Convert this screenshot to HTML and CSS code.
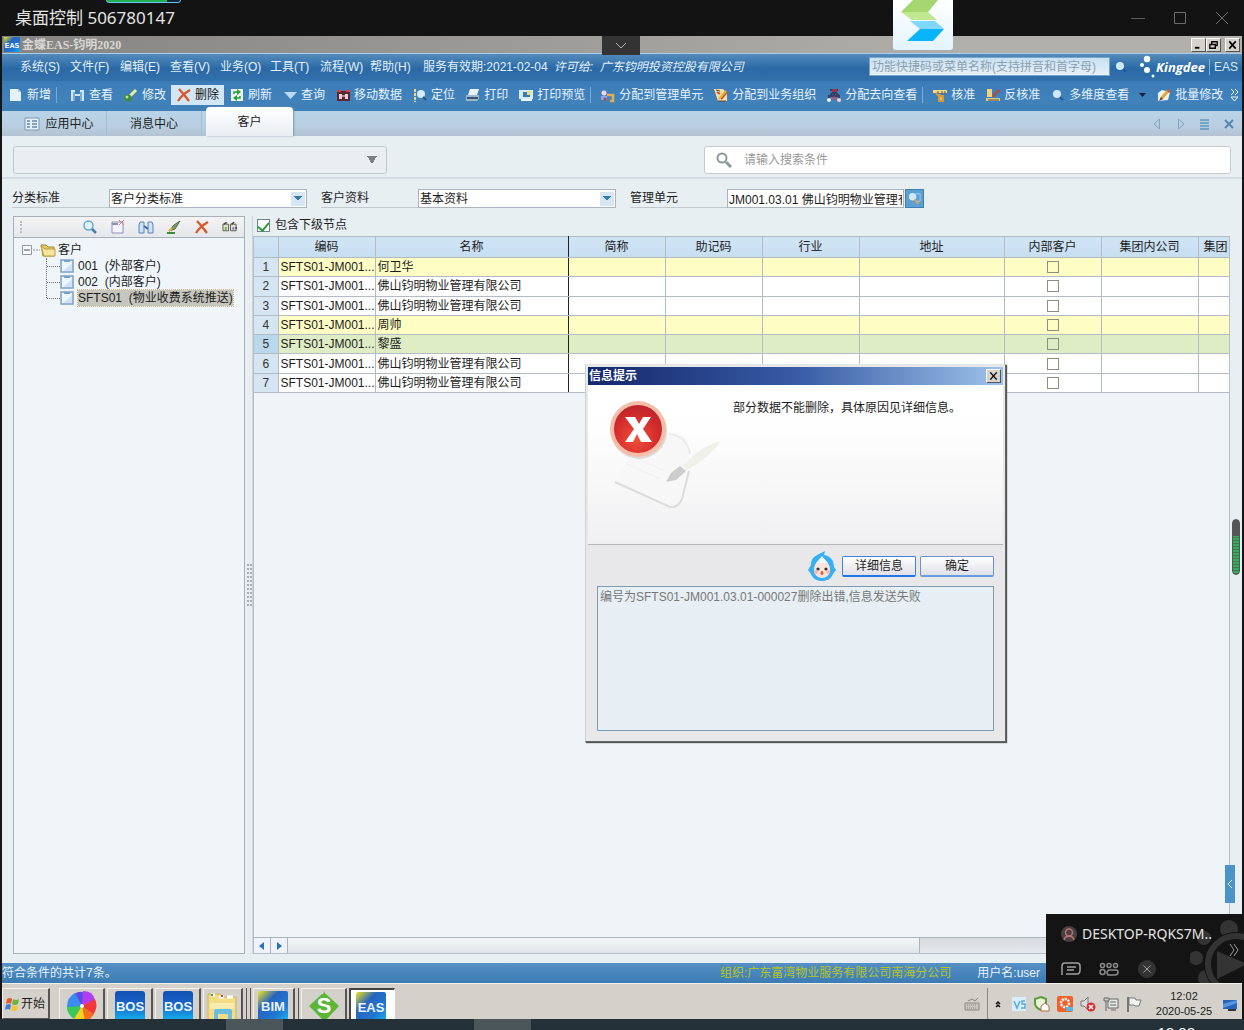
FILE: index.html
```html
<!DOCTYPE html>
<html lang="zh-CN">
<head>
<meta charset="utf-8">
<title>桌面控制 506780147</title>
<link rel="stylesheet" href="styles.css">
</head>
<body>
<svg class="defs" aria-hidden="true">
  <defs>
    <linearGradient id="g-blue" x1="0" y1="0" x2="0" y2="1"><stop offset="0" stop-color="#1450b4"/><stop offset=".5" stop-color="#1668c8"/><stop offset="1" stop-color="#16b4f0"/></linearGradient>
    <linearGradient id="g-eas" x1="0" y1="0" x2="1" y2="1"><stop offset="0" stop-color="#f0e61e"/><stop offset=".35" stop-color="#2864be"/><stop offset=".7" stop-color="#1e78d2"/><stop offset="1" stop-color="#1eb4f0"/></linearGradient>
    <radialGradient id="g-red" cx=".45" cy=".7" r=".75"><stop offset="0" stop-color="#f0503c"/><stop offset=".6" stop-color="#d42c2c"/><stop offset="1" stop-color="#b8222a"/></radialGradient>
  </defs>
  <symbol id="i-page" viewBox="0 0 16 16"><path d="M2 2h8l3 3v9H2z" fill="#e4f2fc"/><path d="M10 2v3h3z" fill="#a6cbe8"/></symbol>
  <symbol id="i-binoc" viewBox="0 0 16 16"><path d="M1 3h4v4h5V3h4v11h-4V9H5v5H1z" fill="#d4e6fa"/><path d="M4 5v9M11 5v9" stroke="#5b95d6" stroke-width="1.500"/></symbol>
  <symbol id="i-brush" viewBox="0 0 16 16"><path d="M13 3L7 9" stroke="#e8f0a0" stroke-width="3"/><circle cx="5" cy="11" r="3.500" fill="#3c8c3c"/><circle cx="4" cy="10" r="1.500" fill="#c8e07a"/></symbol>
  <symbol id="i-x" viewBox="0 0 16 16"><path d="M3 2c3 3 6 7 10 12M14 3C9 6 5 9 2 14" stroke="#d9572b" stroke-width="2.400" fill="none"/></symbol>
  <symbol id="i-refresh" viewBox="0 0 16 16"><path d="M2 2h12v12H2z" fill="#e6f4ee"/><path d="M5 7V5h4M11 9v2H7" stroke="#2b9a3a" stroke-width="1.500" fill="none"/><path d="M8 2l4 3-4 3zM8 8l-4 3 4 3z" fill="#2b9a3a"/></symbol>
  <symbol id="i-filter" viewBox="0 0 16 16"><path d="M2 5h13L8.500 12z" fill="#b9d9f7"/></symbol>
  <symbol id="i-move" viewBox="0 0 16 16"><path d="M2 4h13v10H2z" fill="#5a2632"/><path d="M2 3h4v2H2zM11 3h4v2h-4z" fill="#e43c3c"/><path d="M4 7h3v5H4zM10 7h3v5h-3z" fill="#f2cdd4"/><path d="M7 9h3" stroke="#fff"/></symbol>
  <symbol id="i-locate" viewBox="0 0 16 16"><path d="M3 2v13" stroke="#e8d890" stroke-width="2" stroke-dasharray="3 1"/><circle cx="9" cy="7" r="4" fill="#d4ecff"/><path d="M11 10l3 3" stroke="#2a527a" stroke-width="2"/></symbol>
  <symbol id="i-print" viewBox="0 0 16 16"><path d="M5 2h9l-2 6H3z" fill="#e9f3fa"/><path d="M1 8h13v4l-2 2H1z" fill="#9bb7cd"/><path d="M2 11h11" stroke="#39556f" stroke-width="2"/></symbol>
  <symbol id="i-preview" viewBox="0 0 16 16"><path d="M1 3h14v9H1z" fill="#d8ebf8"/><path d="M5 5h7v5H5z" fill="#3878b8"/><path d="M9 4h4v4H9z" fill="#e8df76"/><path d="M3 13h11" stroke="#e9f5ff" stroke-width="2"/></symbol>
  <symbol id="i-unit" viewBox="0 0 16 16"><circle cx="4" cy="6" r="2.500" fill="#f4d0e4"/><path d="M1 9h6v4H1z" fill="#8ba5ee"/><path d="M7 8h6v6h-3" stroke="#e2ae50" stroke-width="2.500" fill="none"/><circle cx="5" cy="12" r="1.500" fill="#b4452e"/></symbol>
  <symbol id="i-org" viewBox="0 0 16 16"><path d="M1 2h9l4 5v7H5z" fill="#f1dfae"/><path d="M4 5l3 2M8 12l6-7" stroke="#d24a28" stroke-width="2"/><path d="M6 12l7-8" stroke="#e9b72e" stroke-width="2"/><path d="M3 3l4 1M5 14h8" stroke="#6b4622"/></symbol>
  <symbol id="i-flow" viewBox="0 0 16 16"><path d="M4 3h8M8 4v4M3 13V9h10v4M4 9l4-5 5 5" stroke="#383d68" stroke-width="2" fill="none"/><path d="M6 2h5v3H6z" fill="#9d3146"/><circle cx="3" cy="13" r="2" fill="#f0f0ff"/><circle cx="13" cy="13" r="2" fill="#f0d0d0"/><circle cx="8" cy="11" r="1.500" fill="#da4848"/></symbol>
  <symbol id="i-approve" viewBox="0 0 16 16"><path d="M1 3h14v3H1z" fill="#f4da8b"/><path d="M4 6l3 3h5M7 9v5h4V8" stroke="#d79b38" stroke-width="2" fill="#edbf60"/><path d="M6 4v3M10 4v3M13 4v3" stroke="#70522c"/></symbol>
  <symbol id="i-unapprove" viewBox="0 0 16 16"><path d="M2 2h5v8H2z" fill="#f0d37f"/><path d="M1 11h14v3H1z" fill="#d6c88f"/><path d="M8 10l3-4 4-3" stroke="#c8402e" stroke-width="2" fill="none"/><path d="M3 13h11" stroke="#5d5132"/></symbol>
  <symbol id="i-glass" viewBox="0 0 16 16"><circle cx="7" cy="7" r="4" fill="#cfeaff"/><path d="M10 10l3 3" stroke="#235b92" stroke-width="2"/></symbol>
  <symbol id="i-edit" viewBox="0 0 16 16"><path d="M2 6l4-3 8 2-2 8-10 1z" fill="#eef1f4"/><path d="M5 12l7-8" stroke="#dfaa3a" stroke-width="3"/><path d="M11 4l2-2 2 2-2 2z" fill="#cc5b40"/><path d="M3 14l2-4 2 2z" fill="#584b37"/></symbol>
  <symbol id="i-search" viewBox="0 0 16 16"><circle cx="6.500" cy="6.500" r="4.500" fill="#e3f4fd" stroke="#6aa7d4" stroke-width="1.500"/><path d="M10 10l4 4" stroke="#4a7fb0" stroke-width="2.500"/></symbol>
  <symbol id="i-newdoc" viewBox="0 0 16 16"><path d="M2 3h11v11H2z" fill="#f3f4fc" stroke="#8d93b8"/><path d="M2 5h6" stroke="#8d93b8" stroke-width="2"/><path d="M9 1l5 5M14 1L9 6" stroke="#dc7f7f"/></symbol>
  <symbol id="i-binoc2" viewBox="0 0 16 16"><path d="M2 3h4v11H1V6zM10 3h4l1 3v8h-5z" fill="#cfe3f7" stroke="#5683b5"/><path d="M6 7l4 3" stroke="#3b6ba1" stroke-width="2"/></symbol>
  <symbol id="i-pen" viewBox="0 0 16 16"><path d="M14 2l-5 8-6 2 5-6z" fill="#7f9c62" stroke="#5a6a48"/><path d="M1 14h8" stroke="#3d8b3a" stroke-width="2"/><path d="M3 12l3-3" stroke="#e0b53c" stroke-width="2"/></symbol>
  <symbol id="i-tree" viewBox="0 0 17 16"><path d="M1 5h6v7H1zM9 5h6v7H9z" fill="#e2e2d2" stroke="#55594e"/><path d="M2 5l3-2M10 5l3-2M14 9h2" stroke="#3e4438" stroke-width="1.500"/><path d="M3 8h2v3H3z" fill="#5cae56"/><path d="M11 8h2v3h-2z" fill="#8f7bda"/></symbol>
  <symbol id="i-leaf" viewBox="0 0 14 14"><path d="M1 1h12v12H1z" fill="#eef6fd" stroke="#7c9fc6" stroke-width="1.500"/><path d="M4 1h6v2H4z" fill="#7c9fc6"/><path d="M3 12l9-8v8z" fill="#cfe2f4"/></symbol>
</svg>

<header class="remote-bar">
  <span class="session-pill"></span>
  <h1>桌面控制 506780147</h1>
  <div class="remote-controls">
    <button aria-label="最小化"><svg viewBox="0 0 16 16"><path d="M1 8.500h14" stroke="#5c5c5c"/></svg></button>
    <button aria-label="最大化"><svg viewBox="0 0 16 16"><path d="M2.500 2.500h11v11h-11z" stroke="#6c6c6c" fill="none"/></svg></button>
    <button aria-label="关闭"><svg viewBox="0 0 16 16"><path d="M2 2l12 12M14 2L2 14" stroke="#6c6c6c"/></svg></button>
  </div>
  <div class="float-logo"><svg viewBox="0 0 60 50"><path d="M20 0h25L35 12H8z" fill="#a5d66f"/><path d="M8 12h27l9 8H19z" fill="#bfe88f"/><path d="M17 21h25l9 8H27z" fill="#80d8ff"/><path d="M27 29h24L40 41H14z" fill="#0ab4fb"/></svg></div>
  <button class="drop-handle" aria-label="展开"><svg viewBox="0 0 12 7"><path d="M1 1l5 5 5-5" stroke="#b4b4b4" fill="none"/></svg></button>
</header>

<div class="desktop">
  <div class="win-title">
    <svg class="eas-mini" viewBox="0 0 16 15"><rect width="16" height="15" fill="url(#g-eas)"/><text x="8" y="11" text-anchor="middle" class="mini-text">EAS</text></svg>
    <b>金蝶EAS-钧明2020</b>
    <div class="win-buttons">
      <button aria-label="最小化"><svg viewBox="0 0 12 10"><path d="M2 8h5" stroke="#000" stroke-width="2"/></svg></button>
      <button aria-label="还原"><svg viewBox="0 0 12 10"><path d="M4 1.500h6v4H8M4 1v3M2 4.500h6v4H2z" stroke="#000" stroke-width="1.500" fill="none"/></svg></button>
      <button class="apart" aria-label="关闭"><svg viewBox="0 0 12 10"><path d="M2.500 1l7 8M9.500 1l-7 8" stroke="#000" stroke-width="1.800"/></svg></button>
    </div>
  </div>

  <nav class="menu-bar">
    <ul>
      <li><a href="#">系统(S)</a></li><li><a href="#">文件(F)</a></li><li><a href="#">编辑(E)</a></li><li><a href="#">查看(V)</a></li>
      <li><a href="#">业务(O)</a></li><li><a href="#">工具(T)</a></li><li><a href="#">流程(W)</a></li><li><a href="#">帮助(H)</a></li>
    </ul>
    <span class="term">服务有效期:2021-02-04</span>
    <i>许可给:&nbsp; 广东钧明投资控股有限公司</i>
    <input class="quick" type="text" aria-label="功能搜索" placeholder="功能快捷码或菜单名称(支持拼音和首字母)">
    <svg class="icon"><use href="#i-glass"/></svg>
    <div class="brand">
      <svg viewBox="0 0 18 26"><g fill="#fff"><circle cx="9" cy="5" r="3.200"/><circle cx="4" cy="11" r="2"/><circle cx="9" cy="16" r="3"/><circle cx="15" cy="22" r="1.500"/></g></svg>
      <b>Kingdee</b><span>EAS</span>
    </div>
  </nav>

  <div class="tool-bar">
    <button><svg class="icon"><use href="#i-page"/></svg>新增</button>
    <span class="sep first"></span>
    <button><svg class="icon"><use href="#i-binoc"/></svg>查看</button>
    <button><svg class="icon"><use href="#i-brush"/></svg>修改</button>
    <button class="active"><svg class="icon"><use href="#i-x"/></svg>删除</button>
    <button><svg class="icon"><use href="#i-refresh"/></svg>刷新</button>
    <button><svg class="icon"><use href="#i-filter"/></svg>查询</button>
    <button><svg class="icon"><use href="#i-move"/></svg>移动数据</button>
    <button><svg class="icon"><use href="#i-locate"/></svg>定位</button>
    <button><svg class="icon"><use href="#i-print"/></svg>打印</button>
    <button><svg class="icon"><use href="#i-preview"/></svg>打印预览</button>
    <span class="sep"></span>
    <button><svg class="icon"><use href="#i-unit"/></svg>分配到管理单元</button>
    <button><svg class="icon"><use href="#i-org"/></svg>分配到业务组织</button>
    <button><svg class="icon"><use href="#i-flow"/></svg>分配去向查看</button>
    <span class="sep"></span>
    <button><svg class="icon"><use href="#i-approve"/></svg>核准</button>
    <button><svg class="icon"><use href="#i-unapprove"/></svg>反核准</button>
    <button><svg class="icon"><use href="#i-glass"/></svg>多维度查看</button>
    <svg class="caret" viewBox="0 0 17 8"><path d="M5 2h7l-3.500 4z" fill="#0c2340"/></svg>
    <button><svg class="icon"><use href="#i-edit"/></svg>批量修改</button>
    <svg class="more" viewBox="0 0 9 12"><path d="M1 0l3 3-3 3M5 0l3 3-3 3M1 8h7l-3.500 4z" stroke="#e8f4ff" fill="none"/></svg>
  </div>

  <div class="tab-bar">
    <button class="tab"><svg class="icon" viewBox="0 0 16 14"><path d="M1 1h14v12H1z" fill="#e5f0f8" stroke="#7898b4"/><path d="M3 4h3M3 7h3M3 10h3M8 4h5M8 7h5M8 10h5" stroke="#6388a9" stroke-width="1.500"/></svg>应用中心</button>
    <button class="tab">消息中心</button>
    <button class="tab current">客户</button>
    <div class="tab-nav">
      <svg viewBox="0 0 10 12"><path d="M7.500 1v10L2 6z" fill="none" stroke="#86a3bb"/></svg>
      <svg viewBox="0 0 10 12"><path d="M2.500 1v10L8 6z" fill="none" stroke="#86a3bb"/></svg>
      <svg viewBox="0 0 10 12"><path d="M0 2h9M0 5h9M0 8h9M0 11h9" stroke="#5b97c2" stroke-width="1.500"/></svg>
      <svg viewBox="0 0 10 12"><path d="M1 2l8 8M9 2l-8 8" stroke="#5685ad" stroke-width="2"/></svg>
    </div>
  </div>

  <section class="search-row">
    <select class="scheme" aria-label="方案"><option></option></select>
    <label class="query"><svg class="icon" viewBox="0 0 16 16"><circle cx="6" cy="6" r="4.500" fill="none" stroke="#8d969c" stroke-width="2"/><path d="M10 10l5 5" stroke="#8d969c" stroke-width="3"/></svg><input type="text" aria-label="搜索条件" placeholder="请输入搜索条件"></label>
  </section>

  <section class="filter-row">
    <label for="f1">分类标准</label>
    <select id="f1"><option>客户分类标准</option></select>
    <label for="f2">客户资料</label>
    <select id="f2"><option>基本资料</option></select>
    <label for="f3">管理单元</label>
    <input id="f3" type="text" value="JM001.03.01 佛山钧明物业管理有限公司">
    <button aria-label="选择管理单元"><svg viewBox="0 0 16 16"><circle cx="6" cy="6" r="4" fill="#cfe9fb"/><path d="M9 3h5v8h-4" stroke="#a6d0ee" fill="none"/><path d="M8 9l4 5" stroke="#d2a757" stroke-width="2"/></svg></button>
  </section>

  <main class="work">
    <aside class="tree-panel">
      <div class="tree-tools">
        <span class="grip"></span>
        <button aria-label="查询"><svg class="icon"><use href="#i-search"/></svg></button>
        <button aria-label="新增分类"><svg class="icon"><use href="#i-newdoc"/></svg></button>
        <button aria-label="查看分类"><svg class="icon"><use href="#i-binoc2"/></svg></button>
        <button aria-label="修改分类"><svg class="icon"><use href="#i-pen"/></svg></button>
        <button aria-label="删除分类"><svg class="icon"><use href="#i-x"/></svg></button>
        <button aria-label="移动分类"><svg class="icon"><use href="#i-tree"/></svg></button>
      </div>
      <div class="tree">
        <div class="node root"><svg class="expander" viewBox="0 0 18 12"><path d="M.5 1.500h9v9h-9z" fill="#fff" stroke="#8d9aa4"/><path d="M2 6h6" stroke="#444"/><path d="M11 6h7" stroke="#8d9aa4" stroke-dasharray="2 1"/></svg><svg class="folder" viewBox="0 0 16 14"><path d="M1 2h5l2 2h6v9H3z" fill="#e7c95f" stroke="#a58a36"/><path d="M1 3l4 3h10v7H4z" fill="#f8e59a" stroke="#b79b45"/></svg>客户</div>
        <ul>
          <li><svg class="leaf"><use href="#i-leaf"/></svg><span>001&nbsp; (外部客户)</span></li>
          <li><svg class="leaf"><use href="#i-leaf"/></svg><span>002&nbsp; (内部客户)</span></li>
          <li><svg class="leaf"><use href="#i-leaf"/></svg><span class="selected">SFTS01&nbsp; (物业收费系统推送)</span></li>
        </ul>
      </div>
    </aside>
    <div class="splitter"></div>
    <div class="list-side">
      <label class="include"><input type="checkbox" checked>包含下级节点</label>
      <div class="grid-box">
        <table>
          <colgroup><col class="c-no"><col class="c-std"><col class="c-name"><col class="c-std"><col class="c-std"><col class="c-std"><col class="c-addr"><col class="c-std"><col class="c-std"><col></colgroup>
          <thead><tr><th></th><th>编码</th><th class="frozen">名称</th><th>简称</th><th>助记码</th><th>行业</th><th>地址</th><th>内部客户</th><th>集团内公司</th><th class="cut">集团</th></tr></thead>
          <tbody>
            <tr class="mark"><th>1</th><td>SFTS01-JM001...</td><td class="frozen">何卫华</td><td></td><td></td><td></td><td></td><td class="tick"><input type="checkbox" aria-label="内部客户 1"></td><td></td><td></td></tr>
            <tr><th>2</th><td>SFTS01-JM001...</td><td class="frozen">佛山钧明物业管理有限公司</td><td></td><td></td><td></td><td></td><td class="tick"><input type="checkbox" aria-label="内部客户 2"></td><td></td><td></td></tr>
            <tr><th>3</th><td>SFTS01-JM001...</td><td class="frozen">佛山钧明物业管理有限公司</td><td></td><td></td><td></td><td></td><td class="tick"><input type="checkbox" aria-label="内部客户 3"></td><td></td><td></td></tr>
            <tr class="mark"><th>4</th><td>SFTS01-JM001...</td><td class="frozen">周帅</td><td></td><td></td><td></td><td></td><td class="tick"><input type="checkbox" aria-label="内部客户 4"></td><td></td><td></td></tr>
            <tr class="picked"><th>5</th><td>SFTS01-JM001...</td><td class="frozen">黎盛</td><td></td><td></td><td></td><td></td><td class="tick"><input type="checkbox" aria-label="内部客户 5"></td><td></td><td></td></tr>
            <tr><th>6</th><td>SFTS01-JM001...</td><td class="frozen">佛山钧明物业管理有限公司</td><td></td><td></td><td></td><td></td><td class="tick"><input type="checkbox" aria-label="内部客户 6"></td><td></td><td></td></tr>
            <tr><th>7</th><td>SFTS01-JM001...</td><td class="frozen">佛山钧明物业管理有限公司</td><td></td><td></td><td></td><td></td><td class="tick"><input type="checkbox" aria-label="内部客户 7"></td><td></td><td></td></tr>
          </tbody>
        </table>
        <div class="h-scroll">
          <button aria-label="向左"><svg viewBox="0 0 10 10"><path d="M7 1v8L2 5z" fill="#2f6fc0"/></svg></button>
          <button aria-label="向右"><svg viewBox="0 0 10 10"><path d="M3 1v8l5-4z" fill="#2f6fc0"/></svg></button>
          <span class="thumb"></span>
        </div>
      </div>
    </div>
    <span class="meter"></span>
    <button class="side-tab" aria-label="展开侧栏"><svg viewBox="0 0 6 10"><path d="M5 1L1 5l4 4" stroke="#d8efff" fill="none"/></svg></button>
  </main>

  <footer class="status-bar">
    <span>符合条件的共计7条。</span>
    <span class="org">组织:广东富湾物业服务有限公司南海分公司</span>
    <span class="user">用户名:user</span>
  </footer>

  <div class="dialog" role="dialog" aria-label="信息提示">
    <div class="dialog-title"><b>信息提示</b><button aria-label="关闭"><svg viewBox="0 0 12 10"><path d="M2.500 1l7 8M9.500 1l-7 8" stroke="#000" stroke-width="1.500"/></svg></button></div>
    <div class="dialog-body">
      <svg class="error-art" viewBox="0 0 130 120">
        <path d="M40 35l34-2q12 3 13 18l-8 48q-4 10-12 9L12 82z" fill="#f7f7f7"/>
        <path d="M12 82l55 25q8 1 12-8l7-28" fill="none" stroke="#dcdcdc" stroke-width="2"/>
        <path d="M66 34q18 2 21 20" fill="none" stroke="#ebebeb" stroke-width="2"/>
        <path d="M80 66q18-20 38-25-12 17-34 29z" fill="#eff1e8"/>
        <path d="M63 82l5-9 9-7 6 5-10 9z" fill="#ccc"/>
        <path d="M24 64l34 15M28 56l34 15" stroke="#f0f0f0"/>
        <circle cx="36" cy="31" r="28" fill="#dadada"/>
        <circle cx="35" cy="29" r="28" fill="#f6bda9"/>
        <circle cx="35" cy="29" r="24" fill="url(#g-red)"/>
        <path d="M22 17h10l4 7 4-7h8l-8 12 9 13H38l-4-8-4 8h-8l9-13z" fill="#fff"/>
      </svg>
      <p>部分数据不能删除，具体原因见详细信息。</p>
    </div>
    <div class="dialog-foot">
      <div class="actions">
        <svg class="mascot" viewBox="0 0 30 30"><path d="M4 14C4 6 9 5 12 3l6-3-1 4c7 1 10 6 10 12l2 3-3 4c-2 5-6 7-11 7S6 28 4 23l-3-4z" fill="#35b0f2"/><path d="M15 8c5 2 8 5 8 11 0 5-4 8-8 8s-8-3-8-8c0-6 3-9 8-11z" fill="#fbe4dc"/><path d="M15 5l6 7H9z" fill="#eef8fd"/><circle cx="11" cy="18" r="1.600" fill="#333"/><circle cx="19" cy="18" r="1.600" fill="#333"/><circle cx="9" cy="21" r="2" fill="#f8b8b0"/><circle cx="21" cy="21" r="2" fill="#f8b8b0"/><ellipse cx="15" cy="22" rx="1.500" ry="2" fill="#e0573c"/></svg>
        <button class="primary">详细信息</button><button>确定</button>
      </div>
      <textarea readonly aria-label="详细信息">编号为SFTS01-JM001.03.01-000027删除出错,信息发送失败</textarea>
    </div>
  </div>

  <div class="remote-panel">
    <svg class="gear" viewBox="0 0 54 69"><g fill="#343434"><circle cx="39" cy="15" r="9"/><circle cx="14" cy="24" r="7"/><circle cx="6" cy="44" r="7"/><circle cx="16" cy="64" r="8"/></g><circle cx="46" cy="50" r="32" fill="#141414"/><circle cx="46" cy="50" r="28" fill="none" stroke="#343434" stroke-width="6"/><path d="M27 37l30 13-30 15z" fill="#343434"/></svg>
    <div class="peer"><svg viewBox="0 0 16 16"><circle cx="8" cy="8" r="8" fill="#4a3f41"/><circle cx="8" cy="6.500" r="3.500" fill="none" stroke="#b9737b" stroke-width="1.500"/><path d="M3 14c1-5 9-5 10 0" fill="none" stroke="#b9737b" stroke-width="1.500"/></svg><span>DESKTOP-RQKS7M..</span></div>
    <div class="peer-tools">
      <button aria-label="聊天"><svg viewBox="0 0 20 16"><path d="M1 14V5q0-3 3-3h12q3 0 3 3v4q0 4-3 4H5M6 6h9M6 9h7" fill="none" stroke="#a0a0a0" stroke-width="1.500"/></svg></button>
      <button aria-label="成员"><svg viewBox="0 0 20 16"><g fill="none" stroke="#8c8c8c" stroke-width="1.500"><circle cx="3.500" cy="4.500" r="2"/><circle cx="10" cy="4.500" r="2"/><circle cx="16.500" cy="4.500" r="2"/><circle cx="3.500" cy="11" r="2.500"/><path d="M8 12q0-3 3-3h6q2 0 2 2 0 3-3 3H9z"/></g></svg></button>
      <button aria-label="断开"><svg viewBox="0 0 20 20"><circle cx="10" cy="10" r="10" fill="#333"/><path d="M6 6l8 8M14 6l-8 8" stroke="#aaa"/></svg></button>
    </div>
    <svg class="chevrons" viewBox="0 0 10 14"><path d="M1 1l4 6-4 6M5 1l4 6-4 6" fill="none" stroke="#9a9a9a"/></svg>
  </div>
</div>

<footer class="task-bar">
  <button class="start"><svg viewBox="0 0 14 14"><path d="M2 2q3-2 5 0l-1 5q-2-2-5 0z" fill="#e4572e"/><path d="M8 2q3 2 6 0l-1 5q-3 2-6 0z" fill="#6cb33e"/><path d="M1 8q3-2 5 0l-1 5q-2-2-5 0z" fill="#3d7fd6"/><path d="M7 8q3 2 6 0l-1 5q-3 2-6 0z" fill="#f4c430"/></svg>开始</button>
  <button aria-label="浏览器"><svg viewBox="0 0 30 30"><path d="M15 15L7 3q8-5 13 1z" fill="#5a4be0"/><path d="M15 15l1-15q10 0 12 9z" fill="#b23cf0"/><path d="M15 15l13-7q4 9-3 17z" fill="#f03a3a"/><path d="M15 15l12 8q-4 7-12 7z" fill="#f4701e"/><path d="M15 15l3 15q-9 1-13-5z" fill="#f6d31e"/><path d="M15 15L7 28Q-1 22 0 14z" fill="#3bc65a"/><path d="M15 15L0 16Q0 6 8 2z" fill="#3b8cf0"/><circle cx="15" cy="15" r="2" fill="#fff"/></svg></button>
  <button aria-label="BOS"><svg viewBox="0 0 30 30"><rect width="30" height="30" rx="3" fill="url(#g-blue)"/><text x="15" y="20" text-anchor="middle" class="task-text">BOS</text></svg></button>
  <button aria-label="BOS"><svg viewBox="0 0 30 30"><rect width="30" height="30" rx="3" fill="url(#g-blue)"/><text x="15" y="20" text-anchor="middle" class="task-text">BOS</text></svg></button>
  <button class="stack2" aria-label="文件夹"><svg viewBox="0 0 30 30"><path d="M1 3h12l2 3h14v24H1z" fill="#f2dc86" stroke="#d0b45a"/><path d="M4 4h4M12 6h5M20 6h6" stroke="#fff" stroke-width="3"/><path d="M4 4h2" stroke="#3da35a" stroke-width="2"/><path d="M14 5h2" stroke="#d2452e" stroke-width="2"/><path d="M3 12h24v6H3z" fill="#f9ecb0"/><path d="M7 20q0-2 2-2h14q2 0 2 2v10h-4v-7H11v7H7z" fill="#6dbde0"/></svg></button>
  <button class="stack1" aria-label="BIM"><svg viewBox="0 0 30 30"><rect width="30" height="30" rx="2" fill="url(#g-eas)"/><text x="15" y="20" text-anchor="middle" class="task-text">BIM</text></svg></button>
  <button aria-label="向日葵"><svg viewBox="0 0 30 30"><path d="M15 0l-1 4h3zM13 3L0 15l14 14h3l13-14L17 3z" fill="#5cb537"/><text x="15" y="22" text-anchor="middle" class="s-text">S</text></svg></button>
  <button class="open" aria-label="EAS"><svg viewBox="0 0 30 30"><rect width="30" height="30" rx="2" fill="url(#g-eas)"/><text x="15" y="20" text-anchor="middle" class="task-text">EAS</text></svg></button>
  <div class="tray">
    <svg class="kbd" viewBox="0 0 16 16"><path d="M1 7h14v7H1zM4 5l4-2 3 2 3-3" fill="#c9c6bf" stroke="#8a8882"/><path d="M3 9h10M3 12h10" stroke="#8a8882" stroke-dasharray="1 1"/></svg>
    <span class="tray-line"></span>
    <svg class="up" viewBox="0 0 6 8"><path d="M1 4l2-2 2 2M1 7l2-2 2 2" stroke="#111" stroke-width="1.500" fill="none"/></svg>
    <svg viewBox="0 0 16 16"><path d="M1 1h14v14H1z" fill="#d8eefb"/><path d="M3 5l3 7 3-7M14 5h-3v3h3v4h-4" stroke="#5ea8e0" stroke-width="1.500" fill="none"/></svg>
    <svg viewBox="0 0 16 16"><path d="M1 3l6-2 5 2v5q-1 5-5 6-5-2-6-6z" fill="#e8f3d8" stroke="#5c9a3c" stroke-width="2"/><path d="M7 10l4-3 4 3v5H7z" fill="#fff" stroke="#c06a40"/></svg>
    <svg viewBox="0 0 16 16"><rect width="16" height="16" rx="2" fill="#f0602a"/><circle cx="8" cy="7" r="4" fill="none" stroke="#fff" stroke-width="2.500" stroke-dasharray="2 1"/><path d="M9 11h7v4H9z" fill="#5ab4e8"/></svg>
    <svg viewBox="0 0 16 16"><path d="M1 5h3l4-4v13l-4-4H1z" fill="#ddd" stroke="#777"/><circle cx="11" cy="11" r="4.500" fill="#d82c34"/><path d="M9 9l4 4M13 9l-4 4" stroke="#fff" stroke-width="1.500"/></svg>
    <svg viewBox="0 0 16 16"><path d="M5 3h10v9H5zM7 6h6M7 9h6M8 14h5" fill="#e8e8e4" stroke="#666"/><path d="M1 2h5v3H1zM3 5v10" stroke="#666" fill="#ccc"/></svg>
    <svg viewBox="0 0 16 16"><path d="M2 1v15" stroke="#777" stroke-width="2"/><path d="M3 2h6l1 2h5l-2 6H9L8 9H3z" fill="#f4f4f0" stroke="#777"/></svg>
    <time><span>12:02</span><span>2020-05-25</span></time>
    <svg viewBox="0 0 16 16"><path d="M1 4h14v9H1z" fill="#2a63b8"/><path d="M1 8l14-4v3L1 12z" fill="#5a96dc"/><path d="M6 14h8" stroke="#333" stroke-width="2"/></svg>
  </div>
</footer>
<div class="host-strip">
  <span class="host-app"></span><span class="host-app alt"></span><span class="host-clock">12:02</span>
</div>
</body>
</html>
```
FILE: styles.css
```css
* { box-sizing: border-box; }
body {
  margin: 0;
  min-height: 100vh;
  display: flex;
  flex-direction: column;
  background: #141414;
  font: 12px/16px "Liberation Sans", "Noto Sans CJK SC", sans-serif;
  color: #1c1c1c;
  overflow: hidden;
}
button, input, select, textarea { font: inherit; color: inherit; margin: 0; padding: 0; border: 0; background: none; border-radius: 0; }
svg { display: block; flex: none; }
a { color: inherit; text-decoration: none; }
ul { list-style: none; margin: 0; padding: 0; }
.defs { position: absolute; width: 0; height: 0; }
.icon { width: 16px; height: 16px; }

/* remote session header */
.remote-bar { position: relative; height: 36px; flex: none; display: flex; align-items: center; justify-content: space-between; padding: 0 14px 0 15px; background: #131313; }
.remote-bar h1 { margin: 0; font: 17px/24px "Noto Sans", "Noto Sans CJK SC", sans-serif; color: #e4e4e4; }
.session-pill { position: absolute; left: 106px; top: -6px; width: 75px; height: 9px; border: 1px solid #6cc2ff; border-radius: 3px; background: linear-gradient(90deg, #22b04c 0 82%, #123 82%); }
.remote-controls { display: flex; gap: 26px; }
.remote-controls svg { width: 16px; height: 16px; }
.float-logo { position: absolute; z-index: 5; left: 893px; top: 0; width: 60px; height: 50px; border-radius: 0 0 3px 3px; background: linear-gradient(#fff, #e2f4fd); }
.drop-handle { position: absolute; z-index: 5; left: 602px; top: 36px; width: 38px; height: 19px; background: #333; display: grid; place-items: center; }
.drop-handle svg { width: 12px; height: 7px; }

.desktop { position: relative; flex: 1; display: flex; flex-direction: column; margin: 0 2px; background: #e8eff3; }
.win-title { height: 18px; display: flex; align-items: center; gap: 2px; padding: 0 2px; background: linear-gradient(90deg, #858483, #b2b0ac 80%); border-bottom: 1px solid #a9cdee; color: #d9d7d3; }
.win-title b { font-family: "Liberation Serif", "Noto Sans CJK SC", serif; }
.eas-mini { width: 16px; height: 15px; }
.mini-text { font: bold 7px "Liberation Sans", sans-serif; fill: #fff; }
.win-buttons { margin-left: auto; display: flex; }
.win-buttons button, .dialog-title button { width: 15px; height: 14px; padding: 1px; background: #d6d3ce; border: 1px solid; border-color: #fff #555 #555 #fff; }
.win-buttons .apart { margin-left: 4px; }
.win-buttons svg, .dialog-title svg { width: 11px; height: 10px; }

.menu-bar { height: 27px; display: flex; align-items: center; padding: 0 4px 2px 18px; background: linear-gradient(#538bbb, #2a69a6 55%, #3271ab); color: #e2f1fb; white-space: nowrap; }
.menu-bar ul { display: flex; }
.menu-bar li { width: 50px; }
.menu-bar .term { margin-left: 3px; }
.menu-bar i { margin-left: 6px; }
.quick { width: 241px; height: 19px; margin-left: auto; padding: 0 2px; background: linear-gradient(#c8e0f3, #e4f1fb); border: 1px solid #7aa5c9; color: #667; }
.quick::placeholder { color: #8e9eac; opacity: 1; }
.menu-bar > .icon { margin-left: 3px; }
.brand { display: flex; align-items: center; margin-left: 9px; color: #fff; }
.brand svg { width: 18px; height: 26px; }
.brand b { font: italic bold 13px/16px "Open Sans", sans-serif; }
.brand span { margin-left: 4px; padding-left: 4px; border-left: 1px solid #7fb0d8; color: #d8e8f5; }

.tool-bar { height: 30px; display: flex; align-items: center; padding: 0 1px 2px; background: linear-gradient(#3b7cb8, #4282bb 60%, #3f7fb7); color: #e6f3fc; white-space: nowrap; }
.tool-bar button { height: 20px; flex: none; display: flex; align-items: center; gap: 3px; padding: 0 5px; }
.tool-bar .active { background: #d3e6f5; color: #111; }
.sep { flex: none; width: 5px; height: 16px; border-left: 1px solid #79aad4; }
.sep.first { width: 9px; }
.caret { width: 17px; height: 8px; }
.more { width: 9px; height: 12px; margin-left: 2px; }

.tab-bar { height: 25px; display: flex; align-items: stretch; padding-left: 10px; background: linear-gradient(#b8d3e8, #b9cfe1 60%, #b2c3d3); }
.tab { width: 95px; display: flex; align-items: center; justify-content: center; gap: 5px; border-right: 1px solid #a4bccf; }
.tab .icon { width: 16px; height: 14px; }
.tab.current { width: 87px; margin: -4px 0 0 4px; background: linear-gradient(#fff, #e9eef2); border: 0; border-radius: 4px 4px 0 0; box-shadow: 1px 0 2px #7d95aa; }
.tab-nav { margin: 0 8px 0 auto; display: flex; align-items: center; gap: 14px; }
.tab-nav svg { width: 10px; height: 12px; }

.search-row { height: 43px; display: flex; align-items: center; justify-content: space-between; padding: 8px 11px 2px; border-bottom: 2px solid #d4dde4; }
.scheme {
  appearance: none;
  width: 374px;
  height: 28px;
  border: 1px solid #bfc9cf;
  border-radius: 3px;
  background:
    linear-gradient(to top right, transparent 50%, #7a7f83 50%) right 14px center / 5px 8px no-repeat,
    linear-gradient(to top left, transparent 50%, #7a7f83 50%) right 9px center / 5px 8px no-repeat,
    #e8eef2;
}
.query { width: 527px; height: 28px; display: flex; align-items: center; gap: 12px; padding: 0 11px; background: #fff; border: 1px solid #c3cbd1; border-radius: 3px; }
.query input { flex: 1; outline: 0; }
.query input::placeholder { color: #999; opacity: 1; }

.filter-row { height: 37px; display: flex; align-items: center; padding: 2px 10px 0; }
.filter-row label { width: 97px; height: 19px; line-height: 18px; border-bottom: 1px solid #c1c9cf; }
.filter-row select {
  appearance: none;
  width: 198px;
  height: 19px;
  margin-right: 14px;
  padding: 0 1px;
  border: 1px solid #aab6bf;
  background:
    linear-gradient(to top right, transparent 50%, #3878b4 50%) right 8px center / 4px 5px no-repeat,
    linear-gradient(to top left, transparent 50%, #3878b4 50%) right 4px center / 4px 5px no-repeat,
    linear-gradient(#d6e6f3, #d6e6f3) right 1px center / 14px 14px no-repeat,
    #fff;
}
.filter-row input { width: 177px; height: 19px; padding: 0 1px; background: #fff; border: 1px solid #aab6bf; }
.filter-row button { width: 19px; height: 19px; margin-left: 1px; padding: 1px; background: #5b9fd3; border: 1px solid #3f7fb4; }
.filter-row button svg { width: 15px; height: 15px; }

.work { position: relative; flex: 1; min-height: 0; display: flex; padding: 0 12px 9px 11px; }
.tree-panel { width: 232px; border: 1px solid #a8b1b8; background: #eff5f9; }
.tree-tools { height: 21px; display: flex; align-items: center; gap: 12px; padding: 0 6px; border-bottom: 1px solid #a8b1b8; background: linear-gradient(#f5f3f4, #e4e7eb); }
.tree-tools .grip { width: 4px; height: 12px; margin-right: auto; border-left: 2px dotted #bbb; }
.tree { padding: 4px 8px; }
.node, .tree li { display: flex; align-items: center; height: 16px; white-space: nowrap; }
.expander { width: 18px; height: 12px; }
.folder { width: 16px; height: 14px; margin-right: 2px; }
.tree ul { margin-left: 24px; border-left: 1px dotted #777; height: 40px; }
.tree li::before { content: ""; width: 13px; border-top: 1px dotted #777; }
.leaf { width: 14px; height: 14px; margin-right: 4px; }
.selected { background: #c6c6be; outline: 1px dotted #d5b487; }
.splitter {
  width: 8px;
  border-right: 1px solid #ccd4da;
  background:
    linear-gradient(#e8eff3, #e8eff3) top / 100% 47% no-repeat,
    linear-gradient(#e8eff3, #e8eff3) bottom / 100% 47% no-repeat,
    linear-gradient(#e8eff3, #e8eff3) left / 2px 100% no-repeat,
    radial-gradient(circle at 1px 1px, #a5adb3 1px, transparent 1px) 2px 0 / 3px 4px;
}
.list-side { flex: 1; min-width: 0; display: flex; flex-direction: column; }
.include { height: 20px; display: flex; align-items: center; gap: 5px; padding: 0 4px 2px; }
.include input { appearance: none; width: 13px; height: 13px; border: 1px solid #6b8494; background: #fff; display: grid; place-items: center; }
.include input::after { content: ""; width: 5px; height: 9px; border: solid #2b9c35; border-width: 0 2px 2px 0; transform: rotate(40deg); }
.grid-box { flex: 1; display: flex; flex-direction: column; border: 1px solid #b4bfc8; border-top: 0; background: #eef4f8; }
table { width: 100%; height: 157px; table-layout: fixed; border-collapse: collapse; }
.c-no { width: 24px; }
.c-std { width: 97px; }
.c-name { width: 193px; }
.c-addr { width: 145px; }
th, td { padding: 0 2px; font-weight: normal; text-align: left; white-space: nowrap; overflow: hidden; border: 1px solid #b3bcc4; }
thead th { height: 21px; text-align: center; background: linear-gradient(#d0e4f5, #c7def1); }
thead .cut { text-align: left; padding: 0 0 0 5px; }
tbody tr { background: #fff; }
tbody th { text-align: center; background: #d5e6f2; color: #333; }
tr > :first-child { border-left: 0; }
tr > :last-child { border-right: 0; }
.mark { background: #fefec4; }
.picked { background: #dfedc4; }
.picked th { background: #b9d8ec; }
tr > .frozen { border-right: 1px solid #222; }
tr > .frozen + * { border-left: 1px solid #222; }
.tick { text-align: center; }
.tick input { appearance: none; display: block; width: 12px; height: 12px; margin: 0 auto; border: 1px solid #8c8f80; }
.h-scroll { height: 16px; margin-top: auto; display: flex; border-top: 1px solid #aab4bb; background: linear-gradient(#d6dade, #e6eaee); }
.h-scroll button { width: 17px; padding: 2px 3px; background: #edf3f8; border-right: 1px solid #aab4bb; }
.h-scroll svg { width: 10px; height: 10px; }
.thumb { width: 632px; background: linear-gradient(#f3f6f8, #dee5e9); border-right: 1px solid #aab4bb; }
.meter { position: absolute; right: 2px; top: 303px; width: 8px; height: 56px; border: 1px solid #555; border-radius: 4px; background: linear-gradient(#555 0 16px, transparent 16px), repeating-linear-gradient(#2fae5c 0 2px, #46754f 2px 3px); }
.side-tab { position: absolute; right: 7px; bottom: 60px; width: 10px; height: 38px; background: #4b92c6; display: grid; place-items: center; }
.side-tab svg { width: 6px; height: 10px; }

.status-bar { height: 20px; display: flex; align-items: center; padding-right: 202px; background: linear-gradient(#5590c6, #3b7bb3); color: #e6f2fb; white-space: nowrap; }
.org { margin-left: auto; color: #b6c41c; }
.user { margin-left: 26px; }

/* message window */
.dialog { position: absolute; left: 583px; top: 328px; width: 421px; height: 378px; display: flex; flex-direction: column; padding: 2px; background: #e8e8ea; border: 1px solid; border-color: #e4e4e4 #666 #666 #d0d0d0; box-shadow: 1px 1px 1px #555; }
.dialog-title { height: 18px; flex: none; display: flex; align-items: center; justify-content: space-between; padding: 0 2px 0 1px; background: linear-gradient(90deg, #14276b, #375ba4 50%, #9dc3ea); color: #fff; }
.dialog-body { height: 160px; display: flex; padding: 15px 20px; background: linear-gradient(#fff 20%, #f0f0f2); border-bottom: 1px solid #b6b6b8; overflow: hidden; }
.error-art { width: 130px; height: 120px; margin-left: -5px; }
.dialog-body p { margin: 0; white-space: nowrap; }
.dialog-foot { flex: 1; display: flex; flex-direction: column; gap: 4px; padding: 5px 9px 8px; }
.actions { height: 32px; display: flex; align-items: center; justify-content: flex-end; gap: 4px; }
.mascot { width: 30px; height: 30px; margin-right: 1px; }
.actions button { width: 74px; height: 21px; border: 1px solid #6b93cf; border-bottom: 2px solid #6b9be0; border-radius: 2px; background: linear-gradient(#fff, #e0e0e8); }
.actions .primary { border-color: #3f83e0; border-bottom: 2px solid #2277e8; }
.dialog-foot textarea { flex: 1; resize: none; padding: 2px; border: 1px solid #7e9bb2; background: #e7eff4; color: #777; outline: 0; }

.remote-panel { position: absolute; right: -2px; bottom: 0; width: 198px; height: 69px; padding: 11px 15px; background: #141414; color: #e4e4e4; overflow: hidden; }
.gear { position: absolute; right: 0; top: 0; width: 54px; height: 69px; }
.peer { position: relative; display: flex; align-items: center; gap: 5px; height: 18px; font: 14px/18px "Noto Sans", sans-serif; }
.peer svg { width: 16px; height: 16px; }
.peer-tools { display: flex; align-items: center; gap: 18px; margin-top: 16px; height: 20px; }
.peer-tools button, .peer-tools svg { width: 20px; height: 18px; }
.chevrons { position: absolute; right: 5px; top: 29px; width: 10px; height: 14px; }

.task-bar { height: 36px; flex: none; display: flex; margin: 0 2px; padding-top: 4px; background: #d4d1ca; border-top: 1px solid #f4f0ea; overflow: hidden; }
.task-bar button { height: 36px; flex: none; width: 46px; margin-right: 2px; padding: 0 7px; border: 1px solid; border-color: #f4f2ee #555 #555 #f4f2ee; border-right-width: 2px; }
.task-bar button svg { width: 30px; height: 30px; }
.task-bar .start { display: flex; gap: 2px; width: 48px; height: 31px; padding: 0 2px; margin-right: 9px; align-items: center; white-space: nowrap; }
.task-bar .start svg { width: 14px; height: 14px; }
.task-bar .stack2 { box-shadow: 3px 0 #d4d1ca, 4px 0 #555, 7px 0 #d4d1ca, 8px 0 #555; width: 40px; padding: 0 3px; margin-right: 10px; }
.task-bar .stack1 { box-shadow: 3px 0 #d4d1ca, 4px 0 #555; width: 42px; padding: 0 4px; margin-right: 6px; }
.task-bar .open { background: #fff; border-color: #444 #fff #fff #444; border-width: 2px 1px 1px 2px; padding: 0 5px; }
.task-text { font: bold 13px "Liberation Sans", sans-serif; fill: #eef4ff; }
.s-text { font: bold 22px/22px "Liberation Sans", sans-serif; fill: #fff; }
.tray { margin-left: auto; display: flex; align-items: center; gap: 7px; padding: 0 4px; height: 32px; }
.tray svg { width: 16px; height: 16px; }
.tray .up { width: 6px; height: 8px; margin-right: 3px; }
.tray-line { width: 1px; height: 32px; background: #888; }
.tray time { display: flex; flex-direction: column; align-items: center; width: 58px; font: 11px/15px "Liberation Sans", sans-serif; margin: 0 2px 0 6px; }
.host-strip { height: 11px; flex: none; display: flex; padding-left: 226px; background: #253139; color: #fff; overflow: hidden; }
.host-app { width: 57px; background: #4b565a; }
.host-app.alt { margin-left: 191px; }
.host-clock { margin: 5px 49px 0 auto; font: 15px/18px "Liberation Sans", sans-serif; }
```
